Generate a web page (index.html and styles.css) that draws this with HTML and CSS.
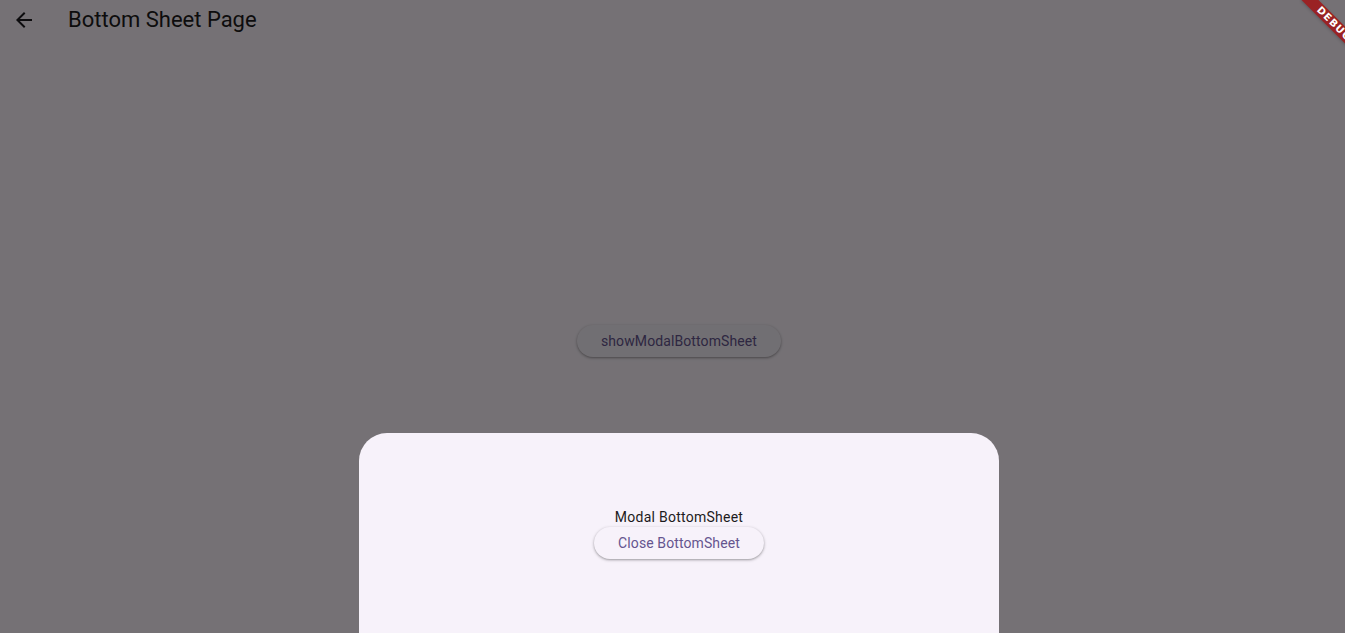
FILE: index.html
```html
<!DOCTYPE html>
<html>
<head>
<meta charset="utf-8">
<link rel="stylesheet" href="styles.css">
</head>
<body>
<div class="page">
  <header class="appbar">
    <button class="back" aria-label="Back">
      <svg width="24" height="24" viewBox="0 0 24 24"><path d="M20 11H7.83l5.59-5.59L12 4l-8 8 8 8 1.41-1.41L7.83 13H20v-2z" fill="#1d1b20"/></svg>
    </button>
    <h1 class="title">Bottom Sheet Page</h1>
  </header>
  <main class="body">
    <button class="elevated">showModalBottomSheet</button>
  </main>
  <div class="scrim"></div>
  <section class="sheet">
    <div class="sheet-content">
      <p class="sheet-text">Modal BottomSheet</p>
      <button class="elevated small">Close BottomSheet</button>
    </div>
  </section>
  <div class="banner"><span>DEBUG</span></div>
</div>
</body>
</html>
```
FILE: styles.css
```css
* { box-sizing: border-box; }
html, body { margin: 0; padding: 0; }
body {
  font-family: Roboto, "Noto Sans", sans-serif;
  background: #fef7ff;
  overflow: hidden;
  width: 1345px;
  height: 633px;
}
.page {
  position: relative;
  width: 1358px;
  height: 633px;
  display: flex;
  flex-direction: column;
  overflow: hidden;
}
.appbar {
  height: 40px;
  display: flex;
  align-items: center;
  padding-left: 12px;
  flex-shrink: 0;
}
.back {
  width: 24px;
  height: 24px;
  padding: 0;
  border: 0;
  background: none;
  display: flex;
}
.title {
  margin: 0 0 0 32px;
  font-size: 22px;
  font-weight: 400;
  color: #1d1b20;
  line-height: 28px;
}
.body {
  flex: 1;
  display: flex;
  align-items: center;
  justify-content: center;
  padding-top: 9px;
}
.elevated {
  height: 32px;
  padding: 0 24px;
  border: 0;
  border-radius: 16px;
  background: #f7f2fa;
  color: #65558f;
  font-family: Roboto, sans-serif;
  font-size: 14px;
  font-weight: 400;
  letter-spacing: 0.1px;
  box-shadow: 0 1px 2px rgba(0,0,0,0.25), 0 1px 3px 1px rgba(0,0,0,0.1);
}
.scrim {
  position: absolute;
  inset: 0;
  background: rgba(0,0,0,0.54);
}
.sheet {
  position: absolute;
  left: 359px;
  top: 433px;
  width: 640px;
  height: 200px;
  background: #f7f2fa;
  border-radius: 28px 28px 0 0;
}
.sheet-content {
  display: flex;
  flex-direction: column;
  align-items: center;
  padding-top: 74px;
}
.sheet-text {
  margin: 0;
  font-size: 14px;
  line-height: 20px;
  letter-spacing: 0.25px;
  color: #1d1b20;
}
.small {
  margin-top: 0;
}
.banner {
  position: absolute;
  left: 1294px;
  top: 18px;
  width: 80px;
  height: 12px;
  transform: rotate(45deg);
  background: #9a2224;
  color: #fff;
  font-family: "DejaVu Sans", sans-serif;
  font-weight: 800;
  font-size: 10px;
  line-height: 12px;
  text-align: center;
  letter-spacing: 1px;
  box-shadow: 0 1px 3px rgba(0,0,0,0.2);
}
```
